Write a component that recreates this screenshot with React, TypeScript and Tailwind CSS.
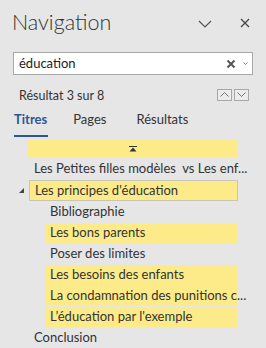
import { ReactNode } from 'react';

function Row({ children, level, hit, boxed }: { children: ReactNode; level: 1 | 2; hit?: boolean; boxed?: boolean }) {
  const indent = level === 1 ? 'ml-[29px] pl-[5px]' : 'ml-[45px] pl-[5px]';
  return (
    <div
      className={`${indent} mr-[28px] h-[20px] flex items-center whitespace-nowrap text-[13px] text-[#333] ${
        hit ? 'bg-[#fdeb8a]' : ''
      } ${boxed ? 'border border-[#c9c6b5] h-[21px]' : ''} mb-px`}
    >
      {children}
    </div>
  );
}

export default function App() {
  return (
    <div className="w-[266px] h-[348px] bg-[#e6e6e6] overflow-hidden" style={{ fontFamily: 'Lato, "Noto Sans", sans-serif' }}>
      <div className="flex items-center h-[42px] pt-[4px] pl-[12px] pr-[16px]">
        <h1 className="text-[21.5px] font-light text-[#333] leading-none flex-1">Navigation</h1>
        <svg width="14" height="8" viewBox="0 0 14 8" className="mr-[28px] mt-[1px]">
          <path d="M1 1l6 6 6-6" fill="none" stroke="#555" strokeWidth="1.2" />
        </svg>
        <svg width="10" height="10" viewBox="0 0 10 10">
          <path d="M1 1l8 8M9 1l-8 8" fill="none" stroke="#444" strokeWidth="1.3" />
        </svg>
      </div>

      <div className="mx-[13px] mt-[10px] h-[23px] bg-white border border-[#a8a8a8] flex items-center pl-[5px] pr-[4px]">
        <span className="flex-1 text-[13px] text-[#222]">éducation</span>
        <svg width="10" height="10" viewBox="0 0 10 10" className="mr-[7px]">
          <path d="M1.5 1.5l7 7M8.5 1.5l-7 7" fill="none" stroke="#555" strokeWidth="2" />
        </svg>
        <svg width="5" height="3" viewBox="0 0 5 3">
          <path d="M0.5 0.5l2 2 2-2" fill="none" stroke="#777" strokeWidth="0.9" />
        </svg>
      </div>

      <div className="flex items-center mt-[14px] pl-[19px] pr-[17px] h-[14px]">
        <span className="flex-1 text-[12.5px] text-[#333]">Résultat 3 sur 8</span>
        <div className="flex gap-[2px] -mt-[3px]">
          <div className="w-[15px] h-[12px] border border-[#a8a8a8] bg-[#ececec] flex items-center justify-center">
            <svg width="9" height="5" viewBox="0 0 9 5">
              <path d="M0.5 4.5l4-4 4 4" fill="none" stroke="#666" strokeWidth="0.9" />
            </svg>
          </div>
          <div className="w-[15px] h-[12px] border border-[#a8a8a8] bg-[#ececec] flex items-center justify-center">
            <svg width="9" height="5" viewBox="0 0 9 5">
              <path d="M0.5 0.5l4 4 4-4" fill="none" stroke="#666" strokeWidth="0.9" />
            </svg>
          </div>
        </div>
      </div>

      <div className="flex items-end h-[34px] pl-[13px] text-[13px] text-[#333]">
        <div className="flex flex-col items-center">
          <span className="font-bold text-[#2b579a] px-[1px]">Titres</span>
          <div className="h-[2px] w-[34px] bg-[#2b579a] mt-[6px]" />
        </div>
        <span className="ml-[25px] mb-[8px]">Pages</span>
        <span className="ml-[30px] mb-[8px]">Résultats</span>
      </div>

      <div className="ml-[28px] mr-[28px] mt-[3px] h-[17px] bg-[#fdeb8a] flex items-center justify-center">
        <svg width="8" height="6" viewBox="0 0 8 6">
          <rect x="0" y="0" width="8" height="1" fill="#333" />
          <path d="M4 1.5L7.5 5.5H0.5Z" fill="#333" />
        </svg>
      </div>

      <div className="mt-[2px]">
        <Row level={1}>Les Petites filles modèles&nbsp; vs Les enf...</Row>
        <div className="relative">
          <svg width="5" height="5" viewBox="0 0 5 5" className="absolute left-[19px] top-[8px]">
            <path d="M5 0V5H0Z" fill="#444" />
          </svg>
          <Row level={1} hit boxed>Les principes d'éducation</Row>
        </div>
        <Row level={2}>Bibliographie</Row>
        <Row level={2} hit>Les bons parents</Row>
        <Row level={2}>Poser des limites</Row>
        <Row level={2} hit>Les besoins des enfants</Row>
        <Row level={2} hit>La condamnation des punitions c...</Row>
        <Row level={2} hit>L’éducation par l'exemple</Row>
        <Row level={1}>Conclusion</Row>
      </div>
    </div>
  );
}
